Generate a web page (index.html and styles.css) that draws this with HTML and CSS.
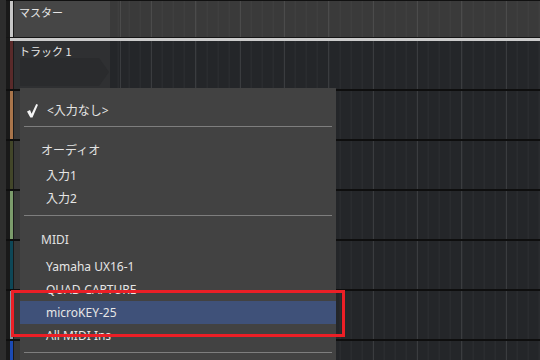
FILE: index.html
```html
<!DOCTYPE html>
<html>
<head>
<meta charset="utf-8">
<link rel="stylesheet" href="styles.css">
</head>
<body>

<div class="daw">
  <div class="gutter"></div>

  <div class="tracks">
    <div class="track master">
      <div class="strip"></div>
      <div class="head"><span class="name">マスター</span></div>
      <div class="lane"></div>
    </div>
    <div class="master-rule"></div>

    <div class="track t1">
      <div class="strip"></div>
      <div class="head">
        <span class="name">トラック 1</span>
        <div class="slot"></div>
      </div>
      <div class="lane"></div>
    </div>
    <div class="track t2"><div class="strip"></div><div class="head"></div><div class="lane"></div></div>
    <div class="track t3"><div class="strip"></div><div class="head"></div><div class="lane"></div></div>
    <div class="track t4"><div class="strip"></div><div class="head"></div><div class="lane"></div></div>
    <div class="track t5"><div class="strip"></div><div class="head"></div><div class="lane"></div></div>
    <div class="track t6"><div class="strip"></div><div class="head"></div><div class="lane"></div></div>
    <div class="track t7"><div class="strip"></div><div class="head"></div><div class="lane"></div></div>
  </div>

  <!-- input select popup -->
  <div class="menu">
    <div class="item checked">
      <svg class="check" width="11" height="14" viewBox="0 0 11 14">
        <path d="M0 7.6 L3 6.1 L4.6 9.7 L9.2 0 L11 0.8 L5.5 13.6 L3.3 13.6 Z" fill="#f4f4f4"/>
      </svg>
      <span>&lt;入力なし&gt;</span>
    </div>
    <div class="sep first"></div>
    <div class="group">オーディオ</div>
    <div class="item">入力1</div>
    <div class="item">入力2</div>
    <div class="sep"></div>
    <div class="group midi">MIDI</div>
    <div class="item">Yamaha UX16-1</div>
    <div class="item">QUAD-CAPTURE</div>
    <div class="item active">microKEY-25</div>
    <div class="item">All MIDI Ins</div>
    <div class="sep"></div>
  </div>

  <div class="callout"></div>
</div>

</body>
</html>
```

FILE: styles.css
```css
html, body {
  margin: 0;
  padding: 0;
  background: #2d2d2d;
  overflow: hidden;
}

.daw {
  position: relative;
  display: flex;
  width: 540px;
  height: 360px;
  overflow: hidden;
  font-family: "Noto Sans", "Noto Sans CJK JP", sans-serif;
}

.gutter {
  width: 6px;
  flex: none;
  background: #2d2d2d;
}

.tracks {
  flex: 1;
  display: flex;
  flex-direction: column;
}

/** TRACK ROWS **/
.track {
  display: flex;
  height: 48px;
  flex: none;
  border-bottom: 2px solid #0e0e0e;
}

.strip {
  width: 3px;
  border-left: 4px solid #191919;
  border-right: 1px solid #191919;
  flex: none;
}

.head {
  width: 96px;
  flex: none;
  background: #383838;
  position: relative;
}

.name {
  display: block;
  padding: 3px 0 0 5px;
  font-size: 11px;
  color: #e6e6e6;
  font-family: "Noto Sans CJK JP", sans-serif;
}

.lane {
  flex: 1;
  background-color: #242629;
  background-image:
    repeating-linear-gradient(90deg, #3a3c3f 0 1px, transparent 1px 44.333px),
    repeating-linear-gradient(90deg, #2d2f32 0 1px, transparent 1px 11.083px);
  background-position: 41px 0, 7.7px 0;
}

.master {
  height: 36px;
  border-top: 1px solid #111;
  border-bottom: 1px solid #151515;
}
.master .strip { background: #c6c6c6; }
.master .head { background: #464646; }
.master .lane {
  background-color: #3a3a3a;
  background-image:
    repeating-linear-gradient(90deg, #4b4b4b 0 1px, transparent 1px 44.333px),
    repeating-linear-gradient(90deg, #414141 0 1px, transparent 1px 11.083px);
}

.master-rule {
  height: 3px;
  flex: none;
  border-left: 4px solid #191919;
  background: #cbcbcb;
}

.t1 .strip { background: #5a2a2a; }
.t1 .head { background: #2f3032; }
.t1 .name { padding-top: 2px; }

.slot {
  position: absolute;
  left: 6px;
  top: 17px;
  width: 89px;
  height: 28px;
  background: #2a2b2d;
  clip-path: polygon(0 0, 79px 0, 89px 14px, 79px 28px, 0 28px);
}

.t2 .strip { background: #a8744a; }
.t3 .strip { background: #424629; }
.t4 .strip { background: #7b9b6b; }
.t5 .strip { background: #0e4757; }
.t6 .strip { background: #8c97a2; }
.t7 .strip { background: #1b4ab4; }

/** POPUP MENU **/
.menu {
  position: absolute;
  left: 20px;
  top: 88px;
  width: 316px;
  height: 280px;
  padding-top: 11px;
  box-sizing: border-box;
  display: flex;
  flex-direction: column;
  background: #424242;
  color: #e6e6e6;
  font-size: 12px;
}

.item {
  flex: none;
  height: 23px;
  line-height: 23px;
  padding-left: 26px;
  white-space: nowrap;
}

.item.checked {
  display: flex;
  align-items: center;
  padding-left: 7px;
}

.check {
  margin-right: 9px;
  margin-top: 1px;
}

.item.active {
  background: #3f5179;
}

.group {
  flex: none;
  height: 23px;
  line-height: 23px;
  margin: 6px 0 3px;
  padding-left: 21px;
  color: #e2e2e2;
  font-family: "Noto Sans CJK JP", sans-serif;
}

.group.midi {
  margin-bottom: 4px;
  font-family: "Noto Sans", sans-serif;
}

.sep {
  flex: none;
  height: 1px;
  margin: 5px 4px 6px;
  background: #7e7e7e;
}

.sep.first {
  margin: 4px 4px 5px;
}

/** ANNOTATION **/
.callout {
  position: absolute;
  left: 11px;
  top: 290px;
  width: 328px;
  height: 41px;
  border: 3px solid #ec1f26;
}
```
